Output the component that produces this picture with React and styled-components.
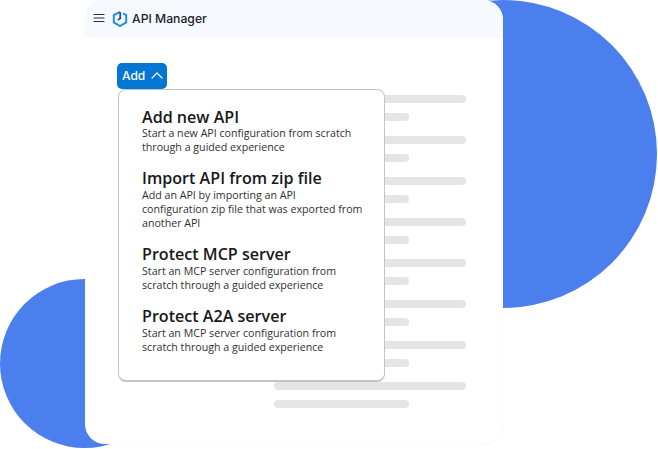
import styled, { createGlobalStyle } from "styled-components";

const options = [
  {
    title: "Add new API",
    text: ["Start a new API configuration from scratch", "through a guided experience"],
  },
  {
    title: "Import API from zip file",
    text: [
      "Add an API by importing an API",
      "configuration zip file that was exported from",
      "another API",
    ],
  },
  {
    title: "Protect MCP server",
    text: ["Start an MCP server configuration from", "scratch through a guided experience"],
  },
  {
    title: "Protect A2A server",
    text: ["Start an MCP server configuration from", "scratch through a guided experience"],
  },
];

const rows = [0, 1, 2, 3, 4, 5, 6, 7];

export default function App() {
  return (
    <>
      <GlobalStyle />
      <Stage>
        <BigCircle />
        <SmallCircle />
        <Card>
          <Header>
            <MenuIcon width="12" height="10" viewBox="0 0 12 10">
              <path d="M1 1.5h10M1 5h10M1 8.5h10" stroke="#2b2f36" strokeWidth="1.2" strokeLinecap="round" />
            </MenuIcon>
            <svg width="16" height="17" viewBox="0 0 16 17" fill="none">
              <path d="M8 1.8 1.8 5.2v7.2L8 16l6.2-3.6V5.2L11 3.4" stroke="#1a8fe0" strokeWidth="2" />
              <path d="M8.2 2v6.4L5.8 10" stroke="#1b5590" strokeWidth="1.8" />
            </svg>
            <Title>API Manager</Title>
          </Header>
          <Body>
            <AddButton>
              Add
              <svg width="12" height="7" viewBox="0 0 12 7" fill="none">
                <path d="M1 6l5-5 5 5" stroke="#fff" strokeWidth="1.2" strokeLinecap="round" strokeLinejoin="round" />
              </svg>
            </AddButton>
            <Content>
              <Menu>
                {options.map((item) => (
                  <Option key={item.title}>
                    <OptionTitle>{item.title}</OptionTitle>
                    {item.text.map((line) => (
                      <OptionLine key={line}>{line}</OptionLine>
                    ))}
                  </Option>
                ))}
              </Menu>
              <Lines>
                {rows.map((row) => (
                  <LinePair key={row}>
                    <Line $width={192} />
                    <Line $width={135} />
                  </LinePair>
                ))}
              </Lines>
            </Content>
          </Body>
        </Card>
      </Stage>
    </>
  );
}

const GlobalStyle = createGlobalStyle`
  html, body {
    margin: 0;
    padding: 0;
    background: #fff;
  }
`;

const Stage = styled.div`
  position: relative;
  width: 658px;
  height: 449px;
  overflow: hidden;
  padding-left: 85px;
  box-sizing: border-box;
`;

const BigCircle = styled.div`
  position: absolute;
  left: 349px;
  top: 0;
  width: 308px;
  height: 308px;
  border-radius: 50%;
  background: #4b7fed;
`;

const SmallCircle = styled.div`
  position: absolute;
  left: 0;
  top: 279px;
  width: 169px;
  height: 169px;
  border-radius: 50%;
  background: #4b7fed;
`;

const Card = styled.div`
  position: relative;
  width: 418px;
  height: 444px;
  background: #fff;
  border-radius: 20px;
  overflow: hidden;
  box-shadow: 0 0 1px rgba(60, 80, 110, 0.18);
`;

const Header = styled.div`
  display: flex;
  align-items: center;
  height: 37px;
  padding: 0 0 1px 8px;
  background: #f6faff;
  box-sizing: border-box;
`;

const MenuIcon = styled.svg`
  margin-right: 7px;
`;

const Title = styled.span`
  margin-left: 4px;
  font-family: Inter, "Liberation Sans", sans-serif;
  font-size: 12.2px;
  font-weight: 500;
  color: #20242b;
`;

const Body = styled.div`
  padding: 26px 0 0 32px;
`;

const AddButton = styled.button`
  display: flex;
  align-items: center;
  gap: 6px;
  width: 50px;
  height: 26px;
  padding: 0 0 2px 5px;
  border: 0;
  border-radius: 5px;
  background: #0176d3;
  color: #fff;
  font-family: Inter, "Liberation Sans", sans-serif;
  font-size: 12px;
  font-weight: 500;
`;

const Content = styled.div`
  position: relative;
  padding: 6px 0 0 157px;
`;

const Menu = styled.div`
  position: absolute;
  left: 1px;
  top: 0;
  z-index: 1;
  width: 267px;
  height: 293px;
  box-sizing: border-box;
  padding: 18.5px 0 0 23px;
  display: flex;
  flex-direction: column;
  gap: 16.4px;
  background: #fff;
  border: 1.5px solid #c4c4c4;
  border-bottom-width: 2px;
  border-radius: 8px;
`;

const Option = styled.div`
  display: flex;
  flex-direction: column;
`;

const OptionTitle = styled.div`
  margin-bottom: 1.5px;
  font-family: "Open Sans", "Liberation Sans", sans-serif;
  font-size: 16.1px;
  line-height: 16px;
  font-weight: 600;
  color: #181818;
`;

const OptionLine = styled.div`
  font-family: "Open Sans", "Liberation Sans", sans-serif;
  font-size: 10.65px;
  line-height: 14px;
  color: #303030;
  white-space: nowrap;
`;

const Lines = styled.div`
  display: flex;
  flex-direction: column;
  gap: 15px;
`;

const LinePair = styled.div`
  display: flex;
  flex-direction: column;
  gap: 10px;
`;

const Line = styled.div`
  width: ${(p) => p.$width}px;
  height: 8px;
  border-radius: 4px;
  background: #e5e5e5;
`;
